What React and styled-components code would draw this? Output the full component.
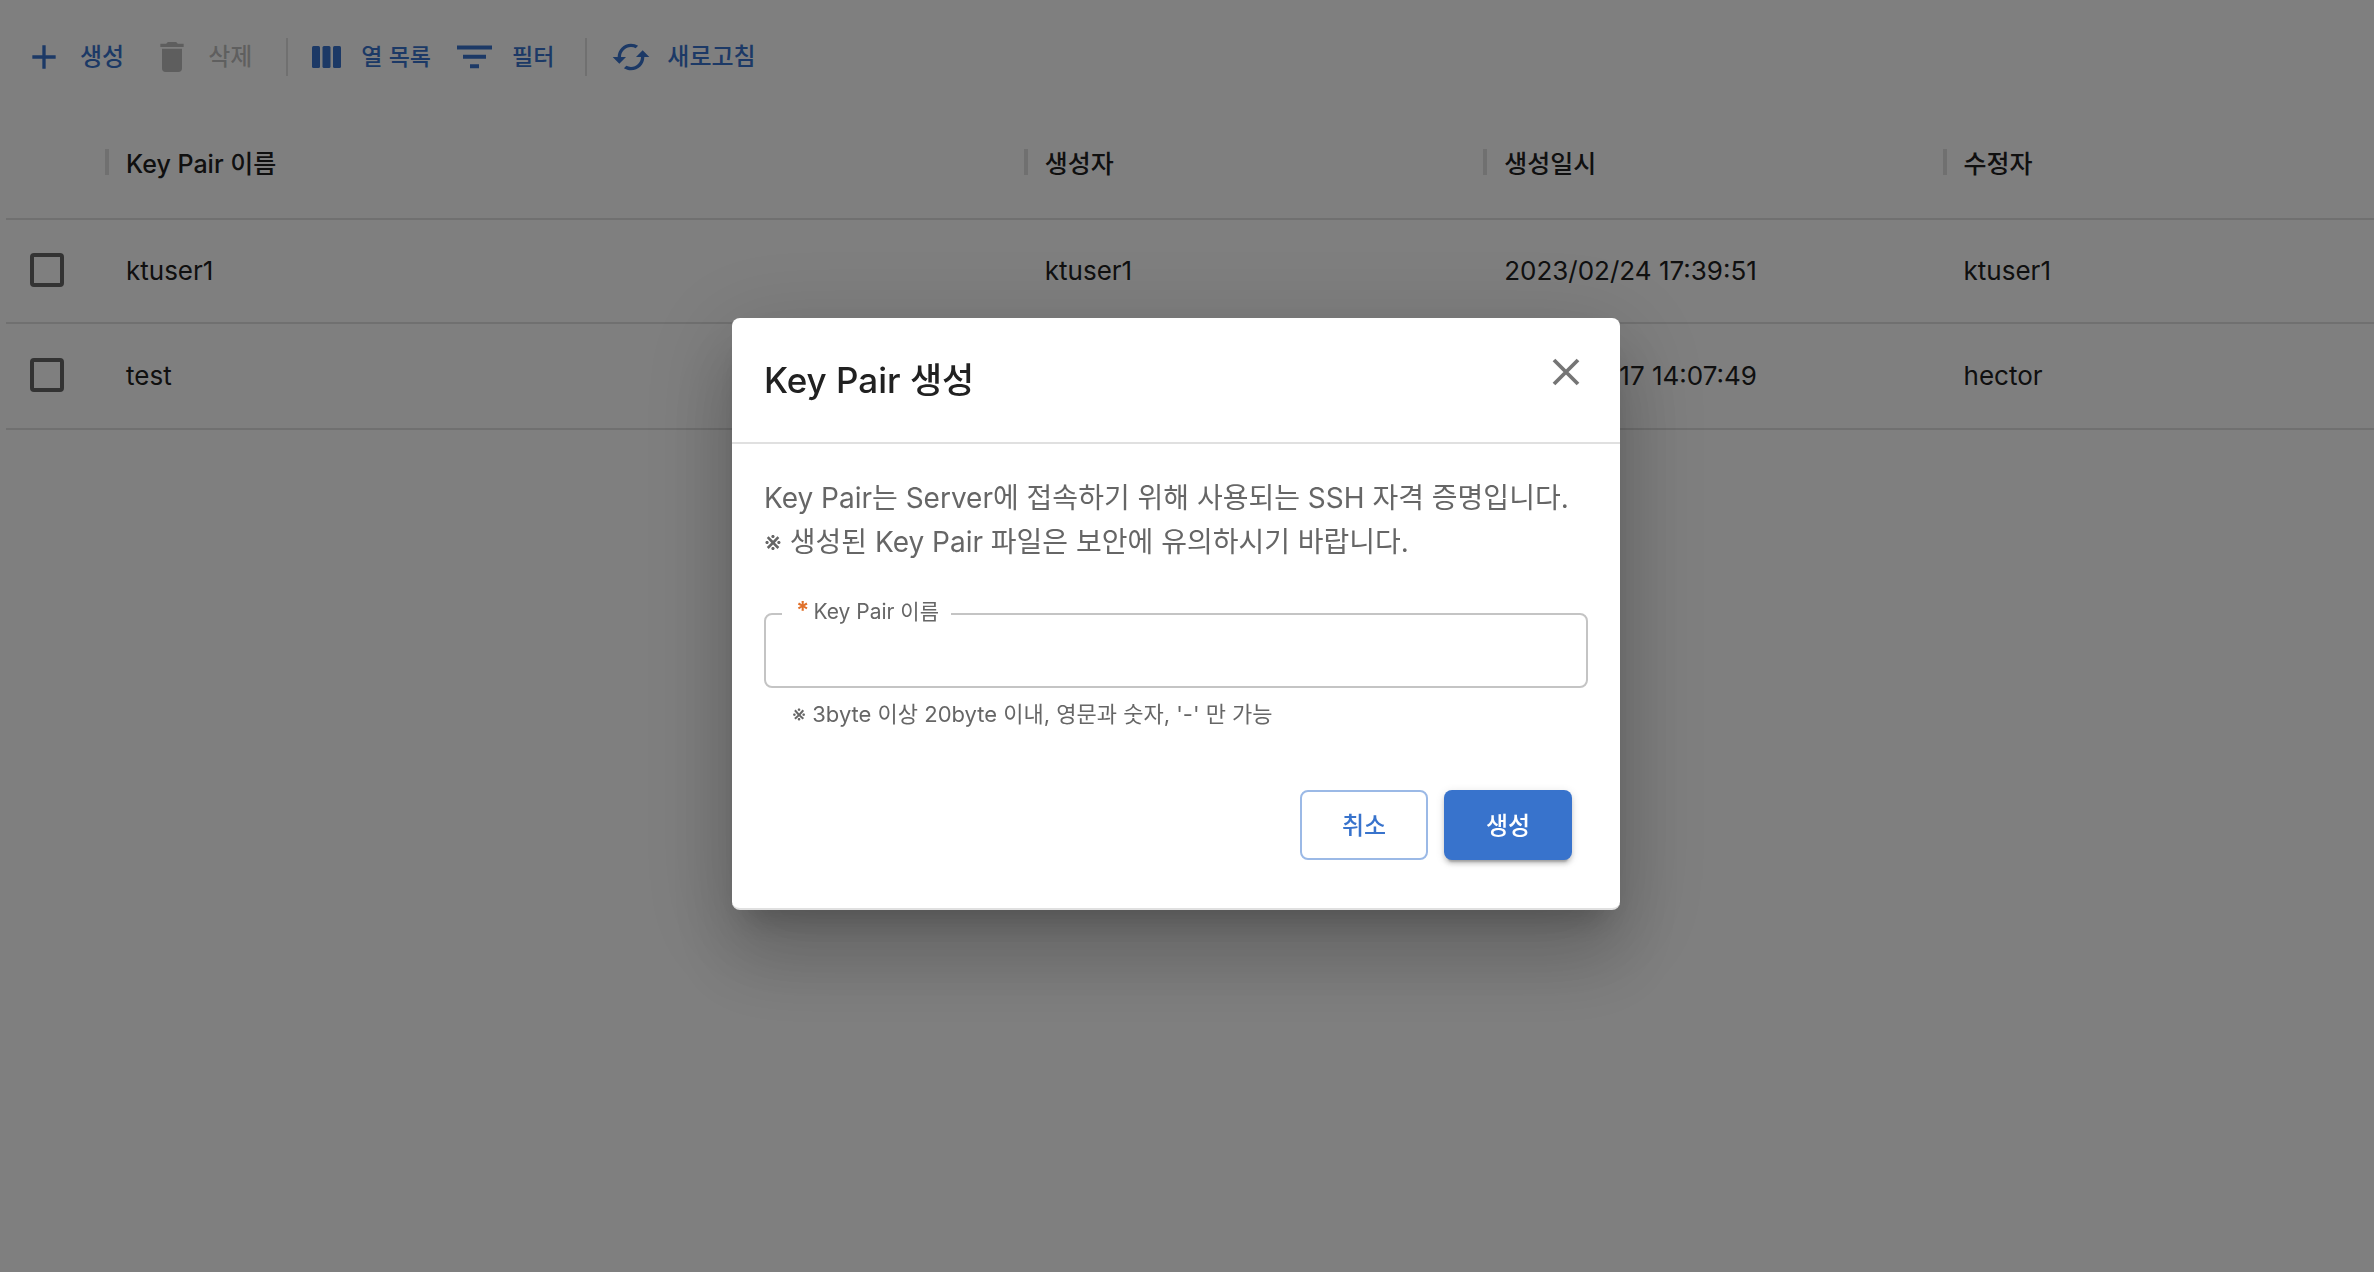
import React from 'react';
import styled, { createGlobalStyle, css } from 'styled-components';

const GlobalStyle = createGlobalStyle`
  *, *::before, *::after { box-sizing: border-box; }
  html, body, #root { height: 100%; }
  body {
    margin: 0;
    overflow: hidden;
    background: #fff;
    color: #212121;
    font-family: Inter, "Noto Sans CJK KR", sans-serif;
    font-size: 24px;
  }
  button, input { font: inherit; }
`;

const Page = styled.main`
  min-height: 100%;
  padding-left: 6px;
`;

const Toolbar = styled.div`
  display: flex;
  align-items: center;
  height: 114px;
  padding-left: 18px;
`;

const ToolGroup = styled.div`
  display: flex;
  align-items: center;
  gap: ${(p) => (p.$compact ? 26 : 28)}px;
`;

const ToolButton = styled.button`
  display: flex;
  align-items: center;
  gap: ${(p) => (p.$compact ? 19 : 16)}px;
  margin: 0;
  padding: 0;
  border: 0;
  background: none;
  color: #3873cc;
  font-size: ${(p) => (p.$compact ? 23 : 24)}px;
  font-weight: 500;
  line-height: 40px;
  white-space: nowrap;

  &:disabled { color: rgba(0, 0, 0, 0.26); }

  svg { display: block; fill: currentColor; }
`;

const ToolDivider = styled.span`
  width: 2px;
  height: 38px;
  margin: 0 24px 0 ${(p) => p.$before}px;
  background: #e0e0e0;
`;

const Table = styled.table`
  width: 100%;
  table-layout: fixed;
  border-collapse: separate;
  border-spacing: 0;
  border-bottom: 2px solid #e0e0e0;
`;

const CheckCol = styled.col`width: 101px;`;
const Col = styled.col`width: ${(p) => p.$width};`;

const cell = css`
  text-align: left;
  white-space: nowrap;
`;

const HeadCell = styled.th`
  ${cell}
  height: 106px;
  padding: 0 20px 0 0;
  border-bottom: 2px solid #e0e0e0;
  font-size: 25px;
  font-weight: 500;
  vertical-align: top;
`;

const HeadLabel = styled.span`
  display: flex;
  align-items: center;
  gap: 17px;
  height: 96px;

  &::before {
    content: "";
    width: 4px;
    height: 26px;
    margin-left: -2px;
    background: #e0e0e0;
  }
`;

const BodyRow = styled.tr`
  &:not(:last-child) td { border-bottom: 2px solid #e0e0e0; }
`;

const Cell = styled.td`
  ${cell}
  height: 104px;
  padding: 0 20px 2px ${(p) => (p.$check ? 24 : 19)}px;
  font-size: 26px;
`;

const Checkbox = styled.input`
  display: block;
  appearance: none;
  width: 34px;
  height: 34px;
  margin: 0;
  border: 4px solid #666;
  border-radius: 4px;
`;

const Backdrop = styled.div`
  position: fixed;
  inset: 0;
  display: flex;
  align-items: center;
  justify-content: center;
  padding: 0 22px 44px 0;
  background: rgba(0, 0, 0, 0.5);
`;

const Dialog = styled.section`
  width: 888px;
  max-width: 100%;
  border-radius: 8px;
  border-bottom: 2px solid #e0e0e0;
  background: #fff;
  box-shadow:
    0 22px 30px -14px rgba(0, 0, 0, 0.2),
    0 48px 76px 6px rgba(0, 0, 0, 0.14),
    0 18px 92px 16px rgba(0, 0, 0, 0.12);
`;

const DialogHeader = styled.header`
  display: flex;
  align-items: flex-start;
  justify-content: space-between;
  height: 126px;
  padding: 34px 34px 0 32px;
  border-bottom: 2px solid #e0e0e0;
`;

const Title = styled.h2`
  margin: 0;
  font-size: 35px;
  font-weight: 500;
  line-height: 56px;
`;

const CloseButton = styled.button`
  margin: 0;
  padding: 0;
  border: 0;
  background: none;
  color: #757575;
  svg { display: block; }
`;

const DialogBody = styled.form`
  padding: 32px 32px 48px;
`;

const Description = styled.p`
  margin: 0 0 36px;
  color: #666;
  font-size: 28px;
  line-height: 44px;
`;

const Field = styled.fieldset`
  min-width: 0;
  height: 88px;
  margin: 0;
  padding: 0 16px;
  border: 2px solid #c4c4c4;
  border-radius: 8px;
`;

const Legend = styled.legend`
  padding: 0 12px 4px 14px;
  color: #666;
  font-size: 21px;
  line-height: 22px;
`;

const Required = styled.span`
  margin-right: 4px;
  color: #e0702a;
  font-size: 24px;
  font-weight: 700;
`;

const TextInput = styled.input`
  display: block;
  width: 100%;
  height: 48px;
  padding: 0 12px;
  border: 0;
  outline: 0;
  background: none;
`;

const Hint = styled.p`
  margin: 10px 28px 0;
  color: #666;
  font-size: 22px;
  line-height: 32px;
`;

const Actions = styled.div`
  display: flex;
  justify-content: flex-end;
  gap: 16px;
  margin-top: 60px;
  padding-right: 16px;
`;

const ActionButton = styled.button`
  width: 128px;
  height: 70px;
  padding: 0 0 4px;
  border: ${(p) => (p.$primary ? '0' : '2px solid #9bb9e6')};
  border-radius: 8px;
  background: ${(p) => (p.$primary ? '#3873cc' : '#fff')};
  color: ${(p) => (p.$primary ? '#fff' : '#3873cc')};
  font-size: 24px;
  font-weight: 500;
  box-shadow: ${(p) =>
    p.$primary
      ? '0 6px 2px -4px rgba(0,0,0,.2), 0 4px 4px rgba(0,0,0,.14), 0 2px 10px rgba(0,0,0,.12)'
      : 'none'};
`;

const Icon = ({ children, size = 40 }) => (
  <svg width={size} height={size} viewBox="0 0 24 24" aria-hidden="true">{children}</svg>
);

const AddIcon = () => <Icon><path d="M19 13h-6v6h-2v-6H5v-2h6V5h2v6h6v2z" /></Icon>;
const DeleteIcon = () => (
  <Icon><path d="M6 19c0 1.1.9 2 2 2h8c1.1 0 2-.9 2-2V7H6v12zM19 4h-3.5l-1-1h-5l-1 1H5v2h14V4z" /></Icon>
);
const ColumnsIcon = () => (
  <svg width="30" height="22" viewBox="0 0 30 22" aria-hidden="true">
    <rect x="0" width="8" height="22" rx="1.5" />
    <rect x="10.5" width="8" height="22" rx="1.5" />
    <rect x="21" width="8" height="22" rx="1.5" />
  </svg>
);
const FilterIcon = () => (
  <svg width="36" height="24" viewBox="0 0 36 24" aria-hidden="true">
    <path d="M0 0.5h35v4H0zM6 9.7h23v4H6zM13 19.2h9v4h-9z" />
  </svg>
);
const RefreshIcon = () => (
  <Icon><path d="M19 8l-4 4h3c0 3.31-2.69 6-6 6-1.01 0-1.97-.25-2.8-.7l-1.46 1.46C8.97 19.54 10.43 20 12 20c4.42 0 8-3.58 8-8h3l-4-4zM6 12c0-3.31 2.69-6 6-6 1.01 0 1.97.25 2.8.7l1.46-1.46C15.03 4.46 13.57 4 12 4c-4.42 0-8 3.58-8 8H1l4 4 4-4H6z" /></Icon>
);
const CloseIcon = () => (
  <svg width="40" height="40" viewBox="0 0 40 40" fill="none" stroke="currentColor" strokeWidth="3.8" aria-hidden="true">
    <path d="M8 8l24 24M32 8L8 32" />
  </svg>
);

const columns = ['Key Pair 이름', '생성자', '생성일시', '수정자'];

const rows = [
  { name: 'ktuser1', creator: 'ktuser1', created: '2023/02/24 17:39:51', editor: 'ktuser1' },
  { name: 'test', creator: 'hector', created: '2023/02/17 14:07:49', editor: 'hector' },
];

export default function App() {
  return (
    <>
      <GlobalStyle />
      <Page>
        <Toolbar>
          <ToolGroup>
            <ToolButton type="button"><AddIcon />생성</ToolButton>
            <ToolButton type="button" disabled><DeleteIcon />삭제</ToolButton>
          </ToolGroup>
          <ToolDivider $before={34} />
          <ToolGroup $compact>
            <ToolButton type="button" $compact><ColumnsIcon />열 목록</ToolButton>
            <ToolButton type="button" $compact><FilterIcon />필터</ToolButton>
          </ToolGroup>
          <ToolDivider $before={31} />
          <ToolGroup>
            <ToolButton type="button"><RefreshIcon />새로고침</ToolButton>
          </ToolGroup>
        </Toolbar>
        <Table>
          <colgroup>
            <CheckCol />
            <Col $width="38.8%" />
            <Col $width="19.4%" />
            <Col $width="19.4%" />
            <Col />
          </colgroup>
          <thead>
            <tr>
              <HeadCell />
              {columns.map((c) => (
                <HeadCell key={c} scope="col"><HeadLabel>{c}</HeadLabel></HeadCell>
              ))}
            </tr>
          </thead>
          <tbody>
            {rows.map((r) => (
              <BodyRow key={r.name}>
                <Cell $check><Checkbox type="checkbox" aria-label={r.name} /></Cell>
                <Cell>{r.name}</Cell>
                <Cell>{r.creator}</Cell>
                <Cell>{r.created}</Cell>
                <Cell>{r.editor}</Cell>
              </BodyRow>
            ))}
          </tbody>
        </Table>
      </Page>
      <Backdrop>
        <Dialog role="dialog" aria-modal="true" aria-labelledby="dialog-title">
          <DialogHeader>
            <Title id="dialog-title">Key Pair 생성</Title>
            <CloseButton type="button" aria-label="닫기"><CloseIcon /></CloseButton>
          </DialogHeader>
          <DialogBody onSubmit={(e) => e.preventDefault()}>
            <Description>
              Key Pair는 Server에 접속하기 위해 사용되는 SSH 자격 증명입니다.
              <br />
              ※ 생성된 Key Pair 파일은 보안에 유의하시기 바랍니다.
            </Description>
            <Field>
              <Legend>
                <label htmlFor="key-pair-name"><Required>*</Required>Key Pair 이름</label>
              </Legend>
              <TextInput id="key-pair-name" type="text" required aria-describedby="key-pair-hint" />
            </Field>
            <Hint id="key-pair-hint">※ 3byte 이상 20byte 이내, 영문과 숫자, '-' 만 가능</Hint>
            <Actions>
              <ActionButton type="button">취소</ActionButton>
              <ActionButton type="submit" $primary>생성</ActionButton>
            </Actions>
          </DialogBody>
        </Dialog>
      </Backdrop>
    </>
  );
}
